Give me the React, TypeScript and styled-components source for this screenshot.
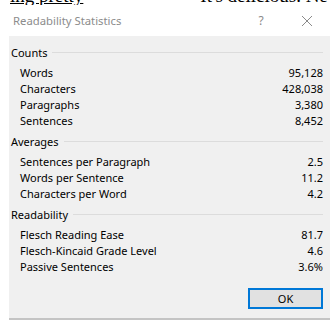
import React from 'react';
import styled, {createGlobalStyle} from "styled-components";

const GlobalStyle = createGlobalStyle`
    body {
        margin: 0;
        background: #ffffff;
        font-family: "Segoe UI", "Noto Sans", sans-serif;
    }
`

type Stat = { label: string, value: string }
type Section = { title: string, rows: Stat[] }

const sections: Section[] = [
    {
        title: 'Counts',
        rows: [
            {label: 'Words', value: '95,128'},
            {label: 'Characters', value: '428,038'},
            {label: 'Paragraphs', value: '3,380'},
            {label: 'Sentences', value: '8,452'},
        ]
    },
    {
        title: 'Averages',
        rows: [
            {label: 'Sentences per Paragraph', value: '2.5'},
            {label: 'Words per Sentence', value: '11.2'},
            {label: 'Characters per Word', value: '4.2'},
        ]
    },
    {
        title: 'Readability',
        rows: [
            {label: 'Flesch Reading Ease', value: '81.7'},
            {label: 'Flesch-Kincaid Grade Level', value: '4.6'},
            {label: 'Passive Sentences', value: '3.6%'},
        ]
    },
]

export default function App() {
    return (
        <>
            <GlobalStyle/>
            <DocStrip>
                <DocText underline>ing pretty</DocText>
                <DocText>It's delicious. Ne</DocText>
            </DocStrip>
            <Dialog>
                <TitleBar>
                    <Title>Readability Statistics</Title>
                    <TitleButtons>
                        <TitleButton>?</TitleButton>
                        <TitleButton>
                            <svg width="12" height="12" viewBox="0 0 12 12">
                                <path d="M1 1L11 11M11 1L1 11" stroke="#8a8a8a" strokeWidth="1"/>
                            </svg>
                        </TitleButton>
                    </TitleButtons>
                </TitleBar>
                <Body>
                    {sections.map(s => (
                        <Group key={s.title}>
                            <GroupHeader>
                                <span>{s.title}</span>
                                <Rule/>
                            </GroupHeader>
                            {s.rows.map(r => (
                                <Row key={r.label}>
                                    <span>{r.label}</span>
                                    <span>{r.value}</span>
                                </Row>
                            ))}
                        </Group>
                    ))}
                    <Footer>
                        <OkButton>OK</OkButton>
                    </Footer>
                </Body>
            </Dialog>
        </>
    );
}

const DocStrip = styled.div`
    height: 5px;
    overflow: hidden;
    display: flex;
    gap: 117px;
    padding-left: 10px;
    white-space: nowrap;
`
const DocText = styled.div<{ underline?: boolean }>`
    font-family: "Liberation Serif", serif;
    font-size: 19px;
    line-height: 19px;
    margin-top: -14px;
    color: #000;
    text-decoration: ${p => p.underline ? 'underline' : 'none'};
`

const Dialog = styled.div`
    width: 330px;
    display: flex;
    flex-direction: column;
`

const TitleBar = styled.div`
    height: 31px;
    display: flex;
    align-items: center;
    justify-content: space-between;
    padding-left: 13px;
`
const Title = styled.div`
    font-size: 11.3px;
    color: #8c8c8c;
`
const TitleButtons = styled.div`
    display: flex;
    align-items: center;
`
const TitleButton = styled.div`
    width: 46px;
    height: 31px;
    display: flex;
    align-items: center;
    justify-content: center;
    font-size: 12px;
    color: #8a8a8a;
`

const Body = styled.div`
    margin-left: 9px;
    background: #f0f0f0;
    border-bottom: 2px solid #c4c4c4;
    padding: 8px 7px 9px 2px;
    display: flex;
    flex-direction: column;
`
const Group = styled.div`
    display: flex;
    flex-direction: column;
    margin-bottom: 5px;
`
const GroupHeader = styled.div`
    display: flex;
    align-items: center;
    gap: 5px;
    height: 16px;
    margin-bottom: 4px;
    font-size: 11px;
    color: #000;
`
const Rule = styled.div`
    flex: 1;
    height: 1px;
    background: #dcdcdc;
`
const Row = styled.div`
    display: flex;
    justify-content: space-between;
    align-items: center;
    height: 16px;
    padding-left: 9px;
    font-size: 11px;
    color: #000;
`
const Footer = styled.div`
    display: flex;
    justify-content: flex-end;
    margin-top: 9px;
`
const OkButton = styled.button`
    width: 75px;
    height: 21px;
    background: #e1e1e1;
    border: 2px solid #0078d7;
    font-family: inherit;
    font-size: 11px;
    color: #000;
    padding: 0;
`
